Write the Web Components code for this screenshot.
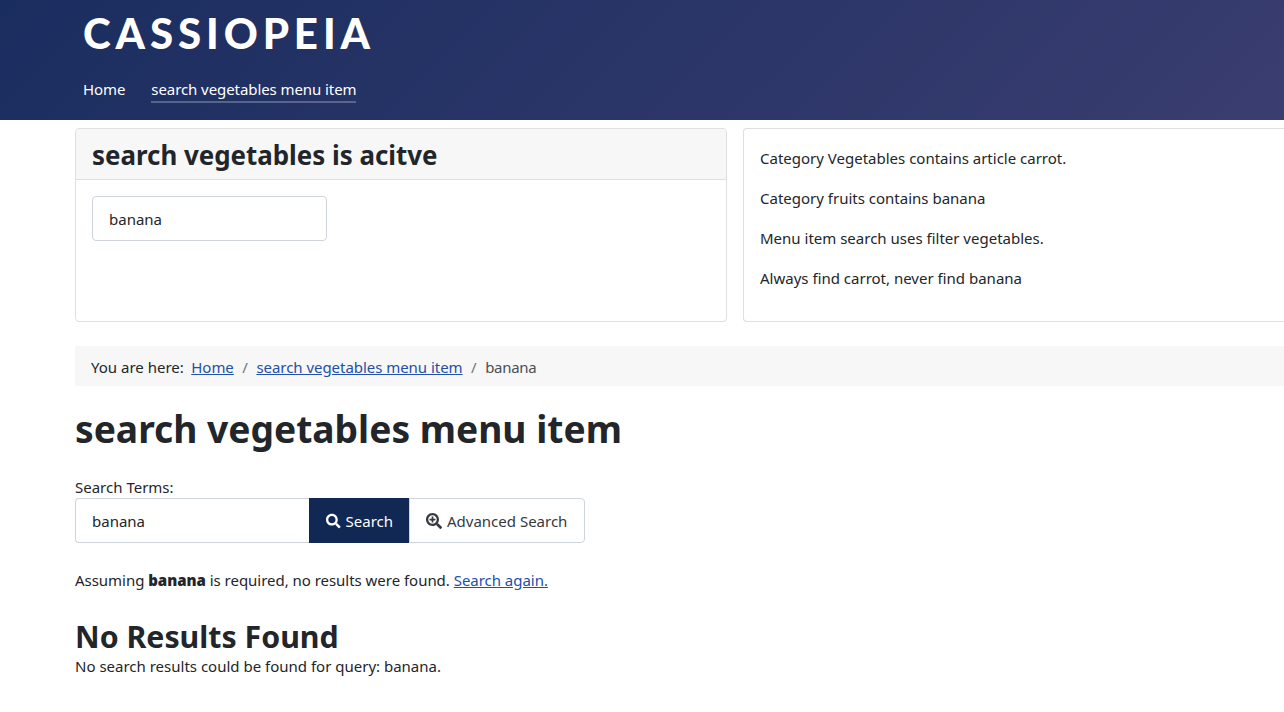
<!DOCTYPE html>
<html lang="en">
<head>
<meta charset="utf-8">
<title>search vegetables menu item</title>
<style>
    html, body {
        margin: 0;
        padding: 0;
        height: 100%;
        overflow: hidden;
        background: #fff;
        color: #22262a;
        font-family: "Noto Sans", "Open Sans", sans-serif;
        font-size: 15px;
        line-height: 24px;
    }
</style>
</head>
<body>
<site-header>
    <a slot="nav" href="#">Home</a>
    <a slot="nav" href="#" data-active>search vegetables menu item</a>
</site-header>

<page-shell>
    <info-card slot="top" heading="search vegetables is acitve">
        <text-field value="banana" style="width:235px"></text-field>
    </info-card>
    <info-card slot="top" bleed>
        <p style="margin:0 0 16px">Category Vegetables contains article carrot.</p>
        <p style="margin:0 0 16px">Category fruits contains banana</p>
        <p style="margin:0 0 16px">Menu item search uses filter vegetables.</p>
        <p style="margin:0 0 16px">Always find carrot, never find banana</p>
    </info-card>
    <bread-crumbs></bread-crumbs>
    <search-view></search-view>
</page-shell>

<template id="site-header-tpl">
    <style>
        :host {
            display: block;
            height: 120px;
            box-sizing: border-box;
            padding: 8px 0 0 83px;
            background: linear-gradient(135deg, #1a2d5f 0%, #3a3d70 100%);
            color: #fff;
        }

        .brand {
            font-family: "Lato", sans-serif;
            font-weight: 900;
            font-size: 42px;
            line-height: 50px;
            letter-spacing: 4.9px;
            white-space: nowrap;
        }

        nav {
            display: flex;
            gap: 26px;
            margin-top: 19px;
        }

        ::slotted(a) {
            color: #fff;
            text-decoration: none;
            line-height: 24px;
            letter-spacing: -0.08px;
            border-bottom: 2px solid transparent;
        }

        ::slotted(a[data-active]) {
            border-bottom-color: rgba(255, 255, 255, 0.25);
        }
    </style>
    <div class="brand">CASSIOPEIA</div>
    <nav><slot name="nav"></slot></nav>
</template>

<template id="page-shell-tpl">
    <style>
        :host {
            display: block;
            box-sizing: border-box;
            padding: 8px 0 0 75px;
        }

        .top {
            display: grid;
            grid-template-columns: 652px 1fr;
            gap: 16px;
            margin-bottom: 24px;
        }
    </style>
    <div class="top"><slot name="top"></slot></div>
    <slot></slot>
</template>

<template id="info-card-tpl">
    <style>
        :host {
            display: block;
            height: 194px;
            box-sizing: border-box;
            border: 1px solid #dfdfdf;
            border-radius: 4px;
            overflow: hidden;
        }

        /* second card runs off the right of the window */
        :host([bleed]) {
            border-right: 0;
            border-radius: 4px 0 0 4px;
        }

        h3 {
            margin: 0;
            padding: 0 16px;
            height: 51px;
            box-sizing: border-box;
            background: #f7f7f7;
            border-bottom: 1px solid #dfdfdf;
            font-size: 25.9px;
            line-height: 52px;
            font-weight: 700;
            white-space: nowrap;
        }

        h3:empty {
            display: none;
        }

        .body {
            padding: 16px;
        }

        :host(:not([heading])) .body {
            padding-top: 17px;
        }
    </style>
    <h3></h3>
    <div class="body"><slot></slot></div>
</template>

<template id="text-field-tpl">
    <style>
        :host {
            display: block;
            height: 45px;
            box-sizing: border-box;
            padding: 0 16px;
            border: 1px solid #ced4da;
            border-radius: 4px;
            background: #fff;
            line-height: 44px;
        }
    </style>
    <span></span>
</template>

<template id="bread-crumbs-tpl">
    <style>
        :host {
            display: flex;
            height: 40px;
            padding-left: 16px;
            padding-top: 2px;
            box-sizing: border-box;
            align-items: center;
            background: #f7f7f7;
            white-space: pre;
        }

        a {
            color: #224faa;
            letter-spacing: -0.04px;
        }

        .sep {
            color: #6d757e;
            padding: 0 8.5px;
        }

        .label {
            margin-right: 7.5px;
        }

        .current {
            color: #495057;
            letter-spacing: -0.3px;
        }
    </style>
    <span class="label">You are here:</span>
    <a href="#">Home</a>
    <span class="sep">/</span>
    <a href="#">search vegetables menu item</a>
    <span class="sep">/</span>
    <span class="current">banana</span>
</template>

<template id="search-view-tpl">
    <style>
        :host {
            display: block;
        }

        h1 {
            margin: 16px 0 0;
            font-size: 37.2px;
            line-height: 54px;
            font-weight: 700;
            white-space: nowrap;
        }

        label {
            display: block;
            margin-top: 19px;
            line-height: 24px;
            height: 23px;
        }

        .group {
            display: flex;
            width: 510px;
            height: 45px;
        }

        text-field {
            width: 234px;
            border-radius: 4px 0 0 4px;
            border-right: 0;
        }

        .btn {
            display: flex;
            align-items: center;
            gap: 5px;
            box-sizing: border-box;
            padding: 0 16px;
            white-space: nowrap;
        }

        .btn svg {
            width: 16px;
            height: 16px;
            fill: currentColor;
        }

        .primary {
            background: #112855;
            color: #fff;
            width: 100px;
            padding-left: 17px;
        }

        .secondary {
            flex: 1;
            border: 1px solid #ced4da;
            border-radius: 0 4px 4px 0;
            color: #343a40;
        }

        .notice {
            margin: 25px 0 0;
            letter-spacing: -0.03px;
        }

        .notice b {
            font-weight: 900;
        }

        .notice a {
            color: #224faa;
        }

        h2 {
            margin: 27px 0 0;
            font-size: 30.3px;
            line-height: 36px;
            font-weight: 700;
        }

        .empty {
            margin: 0;
            line-height: 22px;
        }
    </style>
    <h1>search vegetables menu item</h1>
    <label>Search Terms:</label>
    <div class="group">
        <text-field value="banana"></text-field>
        <div class="btn primary">
            <svg viewBox="0 0 512 512"><path d="M505 442.7L405.3 343c-4.5-4.5-10.6-7-17-7H372c27.6-35.3 44-79.7 44-128C416 93.1 322.9 0 208 0S0 93.1 0 208s93.1 208 208 208c48.3 0 92.7-16.4 128-44v16.3c0 6.4 2.5 12.5 7 17l99.7 99.7c9.4 9.4 24.6 9.4 33.9 0l28.3-28.3c9.4-9.4 9.4-24.6.1-34zM208 336c-70.7 0-128-57.2-128-128 0-70.7 57.2-128 128-128 70.7 0 128 57.2 128 128 0 70.7-57.2 128-128 128z"/></svg>
            <span>Search</span>
        </div>
        <div class="btn secondary">
            <svg viewBox="0 0 512 512"><path d="M304 192v32c0 6.6-5.4 12-12 12h-56v56c0 6.6-5.4 12-12 12h-32c-6.6 0-12-5.4-12-12v-56h-56c-6.6 0-12-5.4-12-12v-32c0-6.6 5.4-12 12-12h56v-56c0-6.6 5.4-12 12-12h32c6.6 0 12 5.4 12 12v56h56c6.6 0 12 5.4 12 12zm201 284.7L476.7 505c-9.4 9.4-24.6 9.4-33.9 0L343 405.3c-4.5-4.5-7-10.6-7-17V372c-35.3 27.6-79.7 44-128 44C93.1 416 0 322.9 0 208S93.1 0 208 0s208 93.1 208 208c0 48.3-16.4 92.7-44 128h16.3c6.4 0 12.5 2.5 17 7l99.7 99.7c9.3 9.4 9.3 24.6 0 34zM344 208c0-75.2-60.8-136-136-136S72 132.8 72 208s60.8 136 136 136 136-60.8 136-136z"/></svg>
            <span>Advanced Search</span>
        </div>
    </div>
    <p class="notice">Assuming <b>banana</b> is required, no results were found. <a href="#">Search again.</a></p>
    <h2>No Results Found</h2>
    <p class="empty">No search results could be found for query: banana.</p>
</template>

<script>
    // small helper so each element just names its template
    function fromTemplate(id) {
        return class extends HTMLElement {
            constructor() {
                super();
                this.attachShadow({ mode: 'open' });
                this.shadowRoot.appendChild(document.getElementById(id).content.cloneNode(true));
            }
        };
    }

    class InfoCard extends fromTemplate('info-card-tpl') {
        connectedCallback() {
            this.shadowRoot.querySelector('h3').textContent = this.getAttribute('heading') || '';
        }
    }

    class TextField extends fromTemplate('text-field-tpl') {
        connectedCallback() {
            this.shadowRoot.querySelector('span').textContent = this.getAttribute('value') || '';
        }
    }

    customElements.define('site-header', fromTemplate('site-header-tpl'));
    customElements.define('page-shell', fromTemplate('page-shell-tpl'));
    customElements.define('info-card', InfoCard);
    customElements.define('text-field', TextField);
    customElements.define('bread-crumbs', fromTemplate('bread-crumbs-tpl'));
    customElements.define('search-view', fromTemplate('search-view-tpl'));
</script>
</body>
</html>
